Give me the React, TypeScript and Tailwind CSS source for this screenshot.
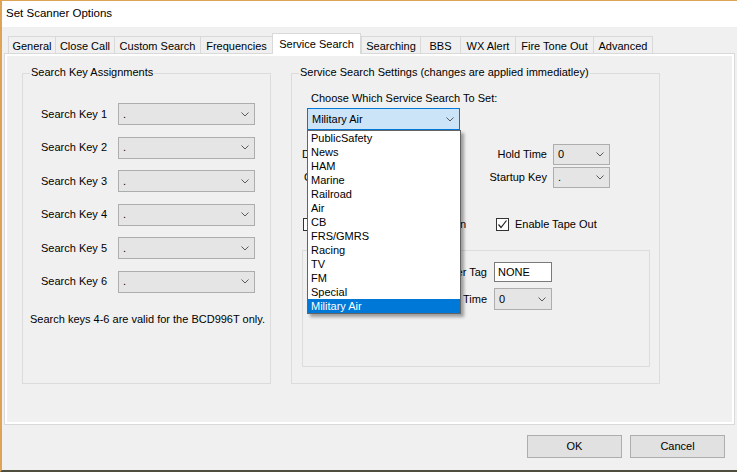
const tabs = [
  { label: "General", w: "w-[47px]" },
  { label: "Close Call", w: "w-[59px]" },
  { label: "Custom Search", w: "w-[86px]" },
  { label: "Frequencies", w: "w-[72px]" },
  { label: "Service Search", w: "w-[89px]", active: true },
  { label: "Searching", w: "w-[59px]" },
  { label: "BBS", w: "w-[40px]" },
  { label: "WX Alert", w: "w-[55px]" },
  { label: "Fire Tone Out", w: "w-[78px]" },
  { label: "Advanced", w: "w-[60px]", last: true },
];

const services = [
  "PublicSafety",
  "News",
  "HAM",
  "Marine",
  "Railroad",
  "Air",
  "CB",
  "FRS/GMRS",
  "Racing",
  "TV",
  "FM",
  "Special",
  "Military Air",
];

function Chevron() {
  return (
    <svg width="8" height="5" viewBox="0 0 8 5" className="shrink-0">
      <polyline points="0.5,0.5 4,4 7.5,0.5" fill="none" stroke="#5a5a5a" strokeWidth="1" />
    </svg>
  );
}

function Combo({ value, className }: { value: string; className: string }) {
  return (
    <div
      className={`flex items-center justify-between border border-[#adadad] bg-[#e5e5e5] pl-[4px] pr-[5px] ${className}`}
    >
      <span>{value}</span>
      <Chevron />
    </div>
  );
}

function CheckBox({ checked }: { checked?: boolean }) {
  return (
    <div className="flex h-[13px] w-[13px] shrink-0 items-center justify-center border border-[#333] bg-white">
      {checked && (
        <svg width="11" height="11" viewBox="0 0 11 11">
          <polyline points="1.5,5.5 4,8.5 9.5,1.5" fill="none" stroke="#222" strokeWidth="1.2" />
        </svg>
      )}
    </div>
  );
}

export default function App() {
  return (
    <div className="flex h-[472px] w-[737px] flex-col border-b-2 border-l-2 border-b-[#4f4e3e] border-l-[#dfa356] font-['Liberation_Sans',Arial,sans-serif] text-[11px] leading-[13px] text-black">
      {/* title bar */}
      <div className="flex h-[27px] shrink-0 items-center border-t border-[#dfa356] bg-white pb-[2px] pl-[4px] text-[11.5px]">
        Set Scanner Options
      </div>

      <div className="flex flex-1 flex-col bg-[#f0f0f0] px-[2px]">
        {/* tabs */}
        <div className="relative z-10 flex h-[27px] items-end pl-[4px]">
          {tabs.map((t) =>
            t.active ? (
              <div
                key={t.label}
                className={`flex h-[21px] items-start justify-center border-x border-t border-[#d9d9d9] bg-white pt-[4px] ${t.w}`}
              >
                {t.label}
              </div>
            ) : (
              <div
                key={t.label}
                className={`mb-[1px] flex h-[17px] items-center justify-center border-l border-t border-[#d9d9d9] bg-[#f0f0f0] pt-[2px] ${t.w} ${t.last ? "border-r" : ""}`}
              >
                {t.label}
              </div>
            )
          )}
        </div>

        {/* tab page */}
        <div className="-mt-[1px] h-[372px] border border-[#d9d9d9]">
          <div className="flex h-full gap-[20px] border-2 border-white pl-[15px] pt-[17px]">
            {/* left group */}
            <div className="relative h-[311px] w-[249px] border border-[#dcdcdc]">
              <div className="absolute -top-[8px] left-[7px] bg-[#f0f0f0] px-[1px]">Search Key Assignments</div>
              <div className="flex flex-col gap-[11.6px] pl-[18px] pt-[29px]">
                {[1, 2, 3, 4, 5, 6].map((n) => (
                  <div key={n} className="flex items-center">
                    <span className="w-[77px]">Search Key {n}</span>
                    <Combo value="." className="h-[22px] w-[137px]" />
                  </div>
                ))}
              </div>
              <div className="mt-[20px] pl-[7px]">Search keys 4-6 are valid for the BCD996T only.</div>
            </div>

            {/* right group */}
            <div className="relative h-[311px] w-[369px] border border-[#dcdcdc] pt-[18px]">
              <div className="absolute -top-[8px] left-[7px] bg-[#f0f0f0] px-[1px]">
                Service Search Settings (changes are applied immediatley)
              </div>
              <div className="pl-[19px]">Choose Which Service Search To Set:</div>
              <div className="ml-[15px] mt-[3px] flex h-[22px] w-[153px] items-center justify-between border border-[#0078d7] bg-[#cce4f7] pl-[4px] pr-[5px]">
                <span>Military Air</span>
                <Chevron />
              </div>

              <div className="mt-[14px] flex flex-col gap-[2px] pl-[10px]">
                <div className="flex h-[21px] items-center">
                  <div className="flex w-[245px] justify-between">
                    <span>Delay Time</span>
                    <span>Hold Time</span>
                  </div>
                  <Combo value="0" className="ml-[6px] h-[21px] w-[57px]" />
                </div>
                <div className="flex h-[21px] items-center">
                  <div className="flex w-[245px] justify-between pl-[2px]">
                    <span>Custom Key</span>
                    <span>Startup Key</span>
                  </div>
                  <Combo value="." className="ml-[6px] h-[21px] w-[57px]" />
                </div>
              </div>

              <div className="mt-[29px] flex h-[15px] items-center pl-[11px]">
                <CheckBox />
                <span className="w-[150px] text-right">Enable Attenuation</span>
                <div className="ml-[30px] flex items-center gap-[6px]">
                  <CheckBox checked />
                  <span>Enable Tape Out</span>
                </div>
              </div>

              {/* inner group */}
              <div className="ml-[10px] mt-[18px] flex h-[117px] w-[348px] flex-col gap-[6px] border border-[#dcdcdc] pt-[11px]">
                <div className="flex items-center">
                  <span className="w-[184px] text-right">Scanner Tag</span>
                  <div className="ml-[7px] flex h-[20px] w-[58px] items-center border border-[#7a7a7a] bg-white pl-[3px]">
                    NONE
                  </div>
                </div>
                <div className="flex items-center">
                  <span className="w-[184px] text-right">Alert Time</span>
                  <Combo value="0" className="ml-[7px] h-[22px] w-[58px]" />
                </div>
              </div>

              {/* open dropdown list */}
              <div className="absolute left-[15px] top-[56px] z-20 w-[154px] border border-[#646464] bg-white shadow-[3px_3px_3px_rgba(0,0,0,0.35)]">
                {services.map((s) => (
                  <div
                    key={s}
                    className={`flex h-[14px] items-center pl-[3px] ${s === "Military Air" ? "bg-[#0078d7] text-white" : ""}`}
                  >
                    {s}
                  </div>
                ))}
              </div>
            </div>
          </div>
        </div>

        {/* buttons */}
        <div className="flex justify-end gap-[8px] pr-[10px] pt-[10px]">
          <button className="h-[23px] w-[95px] border border-[#adadad] bg-[#e1e1e1]">OK</button>
          <button className="h-[23px] w-[95px] border border-[#adadad] bg-[#e1e1e1]">Cancel</button>
        </div>
      </div>
    </div>
  );
}
